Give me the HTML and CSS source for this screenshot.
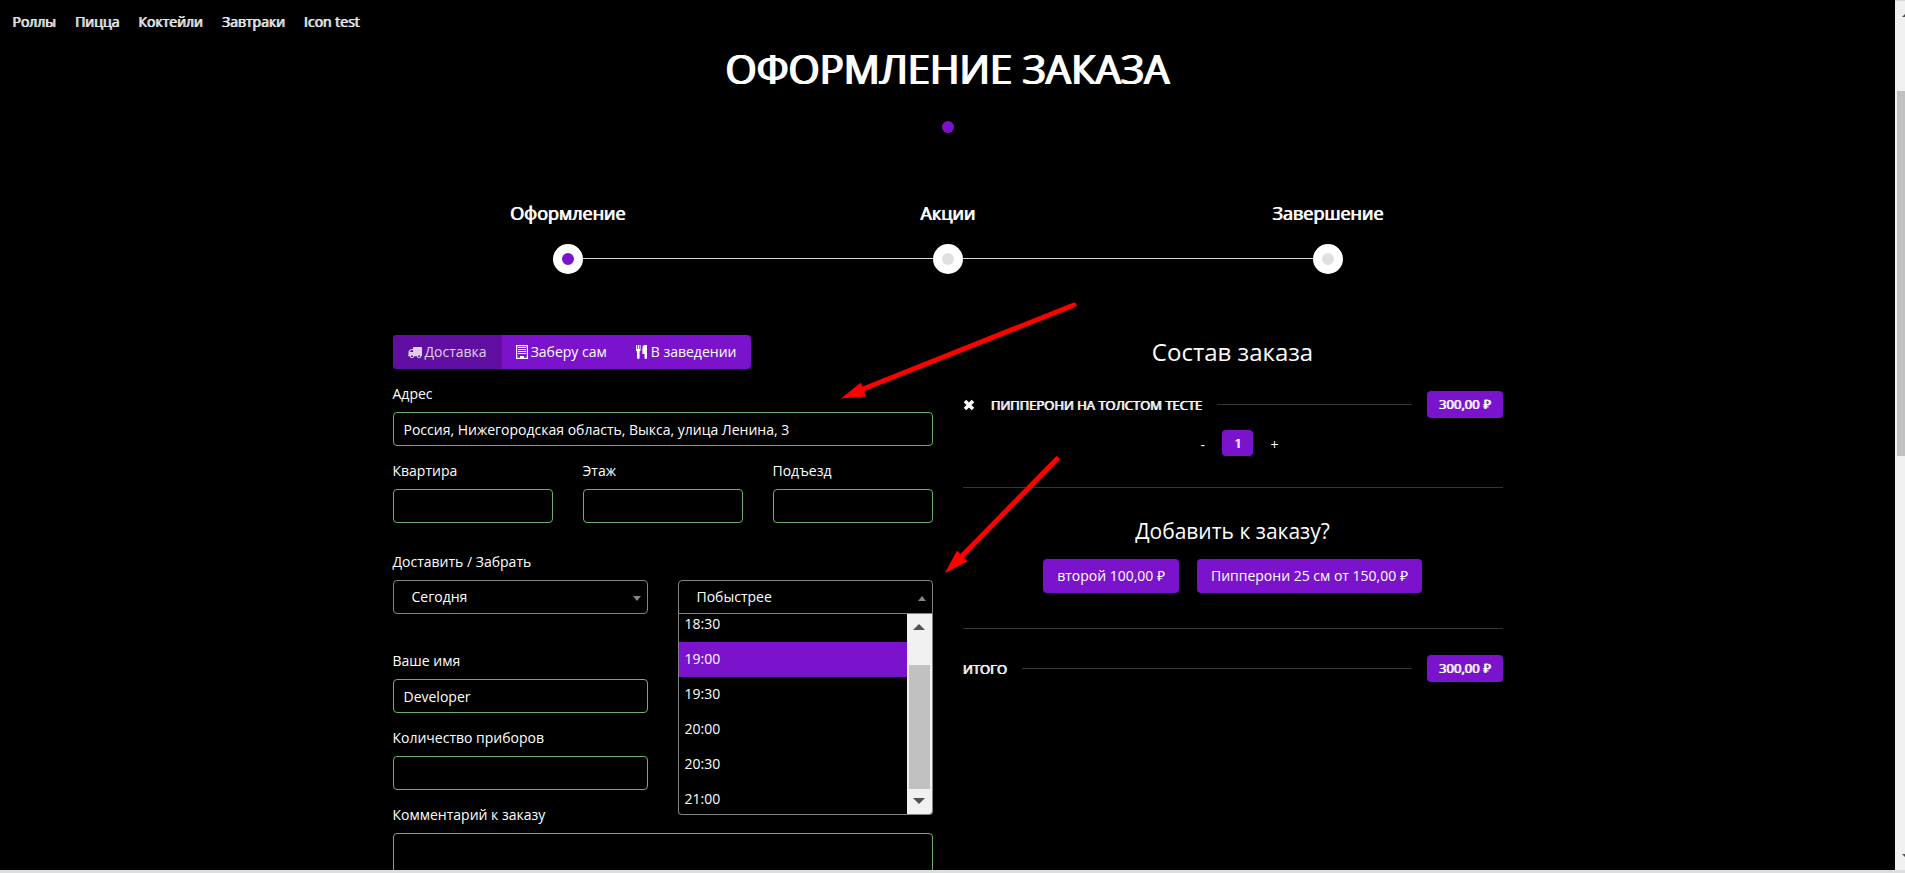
FILE: index.html
```html
<!DOCTYPE html>
<html lang="ru">
<head>
<meta charset="utf-8">
<title>Оформление заказа</title>
<link rel="stylesheet" href="styles.css">
</head>
<body>
<div class="window">
  <div class="page">
    <nav class="menu">
      <a href="#">Роллы</a>
      <a href="#">Пицца</a>
      <a href="#">Коктейли</a>
      <a href="#">Завтраки</a>
      <a href="#">Icon test</a>
    </nav>

    <header class="title">
      <h1>ОФОРМЛЕНИЕ ЗАКАЗА</h1>
      <span class="title-dot"></span>
    </header>

    <ol class="steps">
      <li class="step active"><span class="step-name">Оформление</span><span class="step-mark"></span></li>
      <li class="step"><span class="step-name">Акции</span><span class="step-mark"></span></li>
      <li class="step"><span class="step-name">Завершение</span><span class="step-mark"></span></li>
    </ol>

    <main class="checkout">
      <form class="column">
        <div class="modes">
          <button type="button" class="mode pressed">
            <svg class="icon" width="14" height="14" viewBox="0 0 14 14" aria-hidden="true"><path fill="currentColor" fill-rule="evenodd" d="M5.5 2H13.5Q14 2 14 2.5V10.5Q14 11.2 13 11.2A2 2 0 0 1 9 11.2H6A2 2 0 0 1 2 11.2H.6Q0 11.2 0 10.6L.5 10V6.9Q.5 6.3 1 5.8L2.7 4.2Q3 4 3.5 4H5V2.5Q5 2 5.500 2ZM1.600 7H5V5H3.500ZM3 11.200A1 1 0 0 0 5 11.200A1 1 0 0 0 3 11.200ZM10 11.200A1 1 0 0 0 12 11.200A1 1 0 0 0 10 11.200Z"/></svg>
            Доставка</button>
          <button type="button" class="mode">
            <svg class="icon" width="12" height="14" viewBox="0 0 12 14" aria-hidden="true"><path fill="currentColor" fill-rule="evenodd" d="M0 0H12V14H0ZM1.200 1.200V12.800H4V11H8V12.800H10.800V1.200Z"/><path stroke="currentColor" d="M2 2.500H10M2 4.500H10M2 6.500H10M2 8.500H10"/></svg>
            Заберу сам</button>
          <button type="button" class="mode">
            <svg class="icon" width="12" height="14" viewBox="0 0 12 14" aria-hidden="true"><path fill="currentColor" d="M0 0H1V4H1.700V0H2.900V4H3.600V0H4.600V5Q4.600 6 3.600 6.500V13Q3.600 14 2.300 14T1 13V6.500Q0 6 0 5ZM11 0V13Q11 14 9.800 14T8.500 13V9H6.400V3Q6.400 0 9 0Z"/></svg>
            В заведении</button>
        </div>

        <div class="field">
          <label for="address">Адрес</label>
          <input id="address" class="control" type="text" value="Россия, Нижегородская область, Выкса, улица Ленина, 3">
        </div>

        <div class="thirds">
          <div class="field"><label for="flat">Квартира</label><input id="flat" class="control" type="text"></div>
          <div class="field"><label for="floor">Этаж</label><input id="floor" class="control" type="text"></div>
          <div class="field"><label for="entrance">Подъезд</label><input id="entrance" class="control" type="text"></div>
        </div>

        <div class="halves when">
          <div class="field">
            <label for="day">Доставить / Забрать</label>
            <div class="picker">
              <select id="day" class="select"><option>Сегодня</option></select>
            </div>
          </div>
          <div class="field">
            <div class="picker open">
              <select id="time" class="select" aria-label="Время"><option>Побыстрее</option></select>
              <div class="dropdown">
                <ul class="times" role="listbox" aria-label="Время">
                  <li role="option">18:30</li>
                  <li role="option" class="chosen" aria-selected="true">19:00</li>
                  <li role="option">19:30</li>
                  <li role="option">20:00</li>
                  <li role="option">20:30</li>
                  <li role="option">21:00</li>
                </ul>
                <div class="list-scroll"><span class="arrow-up"></span><span class="list-thumb"></span><span class="arrow-down"></span></div>
              </div>
            </div>
          </div>
        </div>

        <div class="halves">
          <div class="field"><label for="name">Ваше имя</label><input id="name" class="control" type="text" value="Developer"></div>
        </div>
        <div class="halves">
          <div class="field"><label for="cutlery">Количество приборов</label><input id="cutlery" class="control" type="text"></div>
        </div>
        <div class="field">
          <label for="comment">Комментарий к заказу</label>
          <textarea id="comment" class="control comment"></textarea>
        </div>
      </form>

      <section class="column order">
        <h2>Состав заказа</h2>
        <div class="line">
          <button type="button" class="remove" aria-label="Удалить"><svg width="12" height="12" viewBox="0 0 12 12" aria-hidden="true"><path stroke="currentColor" stroke-width="3.600" d="M2 2L10 10M10 2L2 10"/></svg></button>
          <span class="strong">ПИППЕРОНИ НА ТОЛСТОМ ТЕСТЕ</span>
          <span class="rule"></span>
          <span class="badge strong">300,00 <span class="rub">₽</span></span>
        </div>
        <div class="quantity">
          <button type="button" class="change">-</button>
          <span class="badge strong">1</span>
          <button type="button" class="change">+</button>
        </div>
        <div class="extras">
          <h3>Добавить к заказу?</h3>
          <div class="extra-buttons">
            <button type="button" class="extra">второй 100,00 <span class="rub">₽</span></button>
            <button type="button" class="extra">Пипперони 25 см от 150,00 <span class="rub">₽</span></button>
          </div>
        </div>
        <div class="line">
          <span class="strong">ИТОГО</span>
          <span class="rule"></span>
          <span class="badge strong">300,00 <span class="rub">₽</span></span>
        </div>
      </section>

      <svg class="pointers" width="250" height="290" viewBox="0 0 250 290" aria-hidden="true">
        <g stroke="#f00" stroke-width="5" stroke-linecap="round"><path d="M243 14L32 98M226 168L131 265"/></g>
        <path fill="#f00" d="M10 107.500L30 91.500L35 105.500ZM114 282L126 259.500L136.500 270.500Z"/>
      </svg>
    </main>
  </div>
  <div class="page-scroll"><div class="scroll-inner"><span class="arrow-up"></span><span class="page-thumb"></span><span class="arrow-down"></span></div></div>
</div>
</body>
</html>
```
FILE: styles.css
```css
* { box-sizing: border-box; }

body {
  margin: 0;
  background: #dcdfe2;
  color: #fff;
  font: 14px/22px "Open Sans", "Noto Sans", sans-serif;
}

button, input, select, textarea { font: inherit; color: inherit; }
button { border: 0; background: none; padding: 0; white-space: nowrap; }

.window {
  display: grid;
  grid-template-columns: 1fr 10px;
  height: 100vh;
  padding-bottom: 3px;
  overflow: hidden;
}
.page { min-width: 0; min-height: 0; overflow: hidden; background: #000; }

.strong, .menu a, .step-name { text-shadow: 1px 0 currentColor; }
.strong { font-size: 13px; }

.menu { display: flex; gap: 19px; padding: 11px 12px 0; }
.menu a { color: #e8e8e8; text-decoration: none; }

.title { display: flex; flex-direction: column; align-items: center; }
h1 { margin: 6px 0 0; font-size: 40px; line-height: 60px; font-weight: 400; text-shadow: 1px 0 currentColor, -1px 0 currentColor; }
.title-dot { width: 12px; height: 12px; margin-top: 22px; border-radius: 50%; background: #7a13cb; }

.steps {
  display: grid;
  grid-template-columns: repeat(3, 1fr);
  max-width: 1140px;
  margin: 67px auto 0;
  padding: 0;
  list-style: none;
}
.step { display: grid; justify-items: center; row-gap: 18px; font-size: 18px; line-height: 26px; }
.step-mark {
  grid-area: 2 / 1;
  width: 30px;
  height: 30px;
  border: 9px solid #fff;
  border-radius: 50%;
  background: #e0e0e0;
  z-index: 1;
}
.active .step-mark { background: #7a13cb; }
.step:not(:last-child)::after {
  content: "";
  grid-area: 2 / 1;
  align-self: start;
  justify-self: end;
  width: 100%;
  height: 1px;
  margin: 14px -50% 0 0;
  background: #d8d8d0;
}

.checkout {
  position: relative;
  display: grid;
  grid-template-columns: 1fr 1fr;
  gap: 30px;
  max-width: 1140px;
  margin: 61px auto 0;
  padding: 0 15px;
}
.column { min-width: 0; }

.modes { display: inline-flex; height: 34px; margin-bottom: 15px; border-radius: 4px; overflow: hidden; background: #7a13cb; }
.mode { display: flex; align-items: center; gap: 3px; padding: 0 15px; }
.mode + .mode { padding-left: 14px; }
.mode.pressed { background: #610fa2; color: #dfcfec; }

.field { margin-bottom: 15px; }
.field label { display: block; height: 23px; margin-bottom: 5px; line-height: 20px; }
.control {
  display: block;
  width: 100%;
  height: 34px;
  padding: 6px 10px;
  border: 1px solid #6fae6f;
  border-radius: 4px;
  background: #000;
}
.comment { height: 90px; resize: none; }
.thirds { display: grid; grid-template-columns: repeat(3, 1fr); gap: 30px; }
.halves { display: grid; grid-template-columns: 1fr 1fr; gap: 30px; }
.when { align-items: end; margin: 14px 0 22px; }

.picker { position: relative; }
.select {
  display: block;
  width: 100%;
  height: 34px;
  padding: 0 18px;
  appearance: none;
  border: 1px solid #858585;
  border-radius: 4px;
  background: #000;
}
.open .select { border-radius: 4px 4px 0 0; }
.picker::after {
  content: "";
  position: absolute;
  right: 7px;
  top: 16px;
  border: 4px solid transparent;
  border-top: 5px solid #858585;
  border-bottom: 0;
}
.picker.open::after { border-top: 0; border-bottom: 5px solid #858585; }
.dropdown {
  position: absolute;
  top: 100%;
  left: 0;
  right: 0;
  z-index: 2;
  display: flex;
  height: 201px;
  overflow: hidden;
  border: 1px solid #858585;
  border-top: 0;
  border-radius: 0 0 4px 4px;
  background: #000;
}
.times { flex: 1; margin: -7px 0 0; padding: 0; list-style: none; }
.times li { height: 35px; padding: 0 6px; line-height: 34px; }
.times .chosen { background: #7a13cb; }

.list-scroll, .scroll-inner { display: flex; flex-direction: column; align-items: center; width: 25px; background: #f1f1f1; }
.list-scroll { padding: 10px 0; }
.arrow-up, .arrow-down { border: 6px solid transparent; }
.arrow-up { border-top: 0; border-bottom-color: #505050; }
.arrow-down { border-bottom: 0; border-top-color: #505050; margin-top: auto; }
.list-thumb { width: 21px; height: 124px; margin-top: 35px; background: #c1c1c1; }
.page-scroll { display: flex; overflow: hidden; border-top: 1px solid #d8d8d8; }
.scroll-inner { flex: none; padding: 10px 0; }
.page-thumb { width: 21px; height: 43%; margin-top: 74px; background: #c1c1c1; }

h2, h3 { margin: 0; font-weight: 400; text-align: center; }
h2 { font-size: 24px; line-height: 34px; margin-bottom: 22px; }
h3 { font-size: 21px; line-height: 30px; }
.line { display: flex; align-items: center; gap: 15px; }
.remove { display: flex; width: 13px; }
.rule { flex: 1; height: 1px; background: #363636; }
.badge { padding: 0 12px; border-radius: 4px; background: #7a13cb; line-height: 26px; }
.quantity { display: flex; justify-content: center; align-items: center; gap: 17px; margin: 12px 0 31px; padding-left: 14px; }
.change { padding-top: 4px; }
.extras { margin-bottom: 26px; padding: 28px 0 35px; border: 1px solid #363636; border-width: 1px 0; }
.extra-buttons { display: flex; justify-content: center; gap: 18px; margin-top: 13px; }
.extra { height: 34px; padding: 0 14px; border-radius: 4px; background: #7a13cb; }
.rub { font-family: "Liberation Serif", serif; }

.pointers { position: absolute; left: 453px; top: -44px; z-index: 3; pointer-events: none; }
```
